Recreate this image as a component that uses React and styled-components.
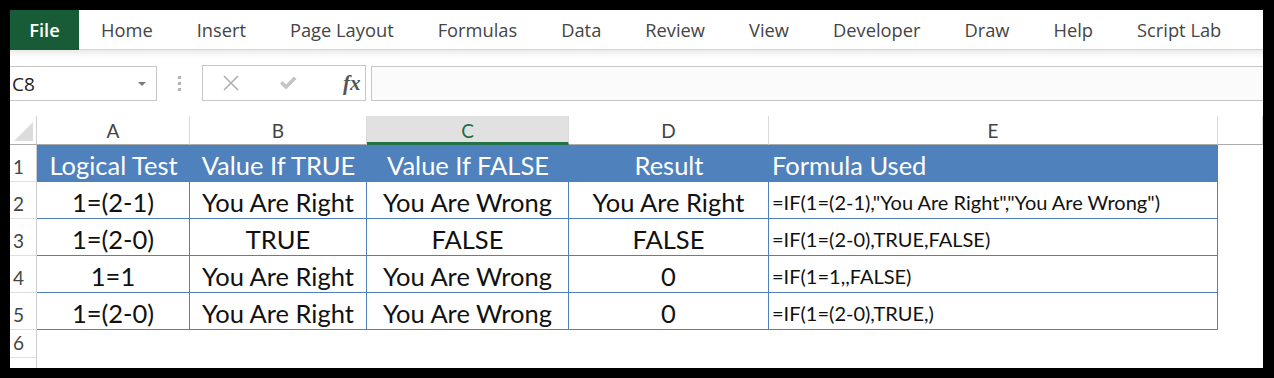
import styled, { createGlobalStyle } from "styled-components"

const Global = createGlobalStyle`
  html, body { margin: 0; padding: 0; background: #000; }
  * { box-sizing: border-box; }
`

const COLS = "27px 153px 177px 202px 200px 449px 1fr"

const Frame = styled.div`
  width: 1274px;
  height: 378px;
  padding: 10px 11px 10px 10px;
  background: #000;
`

const Panel = styled.div`
  height: 358px;
  background: #fff;
  overflow: hidden;
  display: flex;
  flex-direction: column;
  font-family: "Lato", "Liberation Sans", sans-serif;
`

const TabBar = styled.div`
  height: 40px;
  flex-shrink: 0;
  display: flex;
  align-items: stretch;
  gap: 44px;
  background: #fff;
  border-bottom: 1px solid #d2d2d2;
  font-family: "Open Sans", "Liberation Sans", sans-serif;
  font-size: 18.3px;
  color: #444;
`

const Tab = styled.div`
  display: flex;
  align-items: center;
  justify-content: center;
  padding-bottom: 1px;
  ${(p) => p.$file && `
    width: 69px;
    margin-right: -22px;
    margin-bottom: -1px;
    background: #185c37;
    color: #fff;
    font-weight: 600;
  `}
`

const ToolArea = styled.div`
  height: 66px;
  flex-shrink: 0;
  padding-top: 16px;
  display: flex;
  align-items: flex-start;
  background: linear-gradient(#ebebeb 0px, #fff 8px);
`

const NameBox = styled.div`
  width: 147px;
  height: 35px;
  border: 1px solid #c6c6c6;
  border-left: none;
  background: #fff;
  display: flex;
  align-items: center;
  justify-content: space-between;
  padding: 0 10px 0 2px;
  font-family: "Open Sans", "Liberation Sans", sans-serif;
  font-size: 19px;
  color: #222;
`

const Caret = styled.div`
  width: 0;
  height: 0;
  border-left: 4px solid transparent;
  border-right: 4px solid transparent;
  border-top: 4px solid #7a7a7a;
`

const Grip = styled.div`
  width: 45px;
  height: 35px;
  display: flex;
  flex-direction: column;
  align-items: center;
  justify-content: center;
  gap: 3px;
  span {
    width: 3px;
    height: 3px;
    background: #b4b4b4;
  }
`

const FuncBox = styled.div`
  width: 164px;
  height: 36px;
  margin-top: -1px;
  border: 1px solid #c6c6c6;
  display: flex;
  align-items: center;
  padding: 0 0 0 20px;
`

const FuncBtn = styled.div`
  width: 56px;
  display: flex;
  align-items: center;
`

const Fx = styled.span`
  font-family: "Liberation Serif", "DejaVu Serif", serif;
  font-style: italic;
  font-weight: bold;
  font-size: 21px;
  color: #555;
  margin-left: 8px;
`

const FormulaBar = styled.div`
  flex: 1;
  height: 35px;
  margin-left: 5px;
  border: 1px solid #c6c6c6;
  border-right: none;
  background: #fbfbfb;
`

const Sheet = styled.div`
  flex: 1;
  min-height: 0;
  overflow: hidden;
  display: flex;
  flex-direction: column;
`

const Row = styled.div`
  display: grid;
  grid-template-columns: ${COLS};
  height: ${(p) => p.$h}px;
  flex-shrink: 0;
`

const Corner = styled.div`
  border-right: 1px solid #d0d0d0;
  border-bottom: 1px solid #ababab;
  display: flex;
  align-items: flex-end;
  justify-content: flex-end;
  padding: 0 3px 3px 0;
`

const Tri = styled.div`
  width: 0;
  height: 0;
  border-left: 19px solid transparent;
  border-bottom: 19px solid #dcdcdc;
`

const ColHead = styled.div`
  border-right: 1px solid #dadada;
  border-bottom: ${(p) => (p.$active ? "3px solid #217346" : "1px solid #ababab")};
  background: ${(p) => (p.$active ? "#e1e1e1" : "#fff")};
  color: ${(p) => (p.$active ? "#1d6b45" : "#444")};
  display: flex;
  align-items: center;
  justify-content: center;
  font-size: 19px;
  padding-top: ${(p) => (p.$active ? "3px" : "1px")};
`

const RowHead = styled.div`
  border-right: 1px solid #cdcdcd;
  border-bottom: 1px solid #e0e0e0;
  color: #444;
  font-size: 19px;
  display: flex;
  align-items: flex-end;
  padding: 0 0 3px 3px;
`

const Cell = styled.div`
  display: flex;
  align-items: center;
  justify-content: ${(p) => (p.$left ? "flex-start" : "center")};
  padding-left: ${(p) => (p.$left ? "3px" : "0")};
  padding-top: 3px;
  white-space: nowrap;
  overflow: hidden;
  font-size: ${(p) => (p.$small ? "20px" : "25.5px")};
  color: ${(p) => (p.$head ? "#fff" : "#111")};
  background: ${(p) => (p.$head ? "#4f81bd" : "transparent")};
  border-right: ${(p) => (p.$grid ? "1px solid #4f81bd" : "none")};
  border-bottom: ${(p) => (p.$grid || p.$head ? "1px solid #4f81bd" : "none")};
`

const tabs = ["Home", "Insert", "Page Layout", "Formulas", "Data", "Review", "View", "Developer", "Draw", "Help", "Script Lab"]
const letters = ["A", "B", "C", "D", "E", ""]
const header = ["Logical Test", "Value If TRUE", "Value If FALSE", "Result", "Formula Used"]
const data = [
  ["1=(2-1)", "You Are Right", "You Are Wrong", "You Are Right", '=IF(1=(2-1),"You Are Right","You Are Wrong")'],
  ["1=(2-0)", "TRUE", "FALSE", "FALSE", "=IF(1=(2-0),TRUE,FALSE)"],
  ["1=1", "You Are Right", "You Are Wrong", "0", "=IF(1=1,,FALSE)"],
  ["1=(2-0)", "You Are Right", "You Are Wrong", "0", "=IF(1=(2-0),TRUE,)"],
]

export default function App() {
  return (
    <Frame>
      <Global />
      <Panel>
        <TabBar>
          <Tab $file>File</Tab>
          {tabs.map((t) => (
            <Tab key={t}>{t}</Tab>
          ))}
        </TabBar>
        <ToolArea>
          <NameBox>
            C8
            <Caret />
          </NameBox>
          <Grip>
            <span />
            <span />
            <span />
          </Grip>
          <FuncBox>
            <FuncBtn>
              <svg width="16" height="16" viewBox="0 0 16 16">
                <path d="M1 1L15 15M15 1L1 15" stroke="#b0b0b0" strokeWidth="1.6" fill="none" />
              </svg>
            </FuncBtn>
            <FuncBtn>
              <svg width="18" height="14" viewBox="0 0 18 14">
                <path d="M1 7.5L3.5 5L7 8.5L15 0.5L17.5 3L7 13.5Z" fill="#c4c4c4" />
              </svg>
            </FuncBtn>
            <Fx>fx</Fx>
          </FuncBox>
          <FormulaBar />
        </ToolArea>
        <Sheet>
          <Row $h={29}>
            <Corner>
              <Tri />
            </Corner>
            {letters.map((l, i) => (
              <ColHead key={i} $active={l === "C"}>
                {l}
              </ColHead>
            ))}
          </Row>
          <Row $h={37}>
            <RowHead>1</RowHead>
            {header.map((h, i) => (
              <Cell key={i} $head $left={i === 4}>
                {h}
              </Cell>
            ))}
            <div />
          </Row>
          {data.map((r, ri) => (
            <Row key={ri} $h={37}>
              <RowHead>{ri + 2}</RowHead>
              {r.map((v, i) => (
                <Cell key={i} $grid $left={i === 4} $small={i === 4}>
                  {v}
                </Cell>
              ))}
              <div />
            </Row>
          ))}
          <Row $h={28}>
            <RowHead>6</RowHead>
          </Row>
          <Row $h={28}>
            <RowHead />
          </Row>
        </Sheet>
      </Panel>
    </Frame>
  )
}
